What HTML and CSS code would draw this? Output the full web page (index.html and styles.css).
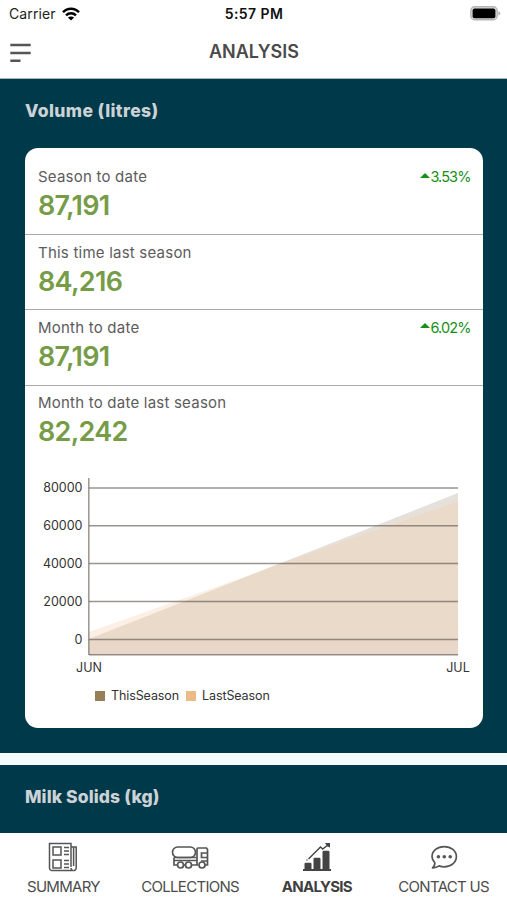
FILE: index.html
```html
<!DOCTYPE html>
<html lang="en">
<head>
  <meta charset="UTF-8">
  <title>Analysis</title>
  <meta name="viewport" content="width=device-width, initial-scale=1.0">
  <link rel="stylesheet" href="styles.css">
</head>
<body>
  <div class="statusbar">
    <div class="carrier">
      <span>Carrier</span>
      <svg width="18" height="14" viewBox="0 0 18 14" fill="none" stroke="#000" stroke-width="2.4">
        <path d="M1 5.2C5.4.5 12.6.5 17 5.2"/>
        <path d="M4 8.4c2.8-2.8 7.2-2.8 10 0"/>
        <path d="M9 13.6 5.9 10.6c1.7-1.5 4.5-1.5 6.2 0z" fill="#000" stroke="none"/>
      </svg>
    </div>
    <div class="time">5:57 PM</div>
    <div class="battery">
      <svg width="31" height="15" viewBox="0 0 31 15">
        <rect x="0.8" y="0.8" width="26.4" height="13" rx="4" fill="#ddd" stroke="#b5b5b5" stroke-width="1.4"/>
        <rect x="2.6" y="2.6" width="22.8" height="9.6" rx="2" fill="#000"/>
        <path d="M28.4 5.2q2 .6 2 2.2t-2 2.2z" fill="#b5b5b5"/>
      </svg>
    </div>
  </div>

  <header class="header">
    <svg class="menu" width="22" height="20" viewBox="0 0 22 20" stroke="#555" stroke-width="2.4">
      <path d="M.3 2h20.4M.3 10h20.4M.3 17.8h10.2"/>
    </svg>
    <h1>ANALYSIS</h1>
  </header>

  <main class="content">
    <section class="section volume">
      <h2>Volume (litres)</h2>
      <div class="card">
        <div class="row">
          <div class="label">Season to date</div>
          <div class="value">87,191</div>
          <div class="change"><i class="up"></i>3.53%</div>
        </div>
        <div class="row">
          <div class="label">This time last season</div>
          <div class="value">84,216</div>
        </div>
        <div class="row">
          <div class="label">Month to date</div>
          <div class="value">87,191</div>
          <div class="change"><i class="up"></i>6.02%</div>
        </div>
        <div class="row">
          <div class="label">Month to date last season</div>
          <div class="value">82,242</div>
        </div>

        <svg class="chart" width="457" height="210" viewBox="0 0 457 210">
          <!-- areas -->
          <path d="M64 163 433 17V179H64z" fill="#e6e0da"/>
          <path d="M64 156 433 25V179H64z" fill="#fcefe5"/>
          <path d="M64 163 248.5 90 433 25V179H64z" fill="#e9dac9"/>
          <path d="M64 164H433V179H64z" fill="#e9d8c9"/>
          <!-- grid and axes -->
          <g stroke="#5a5450" stroke-opacity="0.62" stroke-width="1.5">
            <path d="M64 12H433M64 49.7H433M64 87.5H433M64 125.5H433M64 163.5H433M64 178.7H433"/>
            <path d="M63.8 2V179"/>
          </g>
          <g class="ylabels">
            <text x="57.5" y="16">80000</text>
            <text x="57.5" y="54">60000</text>
            <text x="57.5" y="92">40000</text>
            <text x="57.5" y="130">20000</text>
            <text x="57.5" y="168">0</text>
          </g>
          <g class="xlabels">
            <text x="64" y="195.6">JUN</text>
            <text x="433" y="195.6">JUL</text>
          </g>
        </svg>

        <div class="legend">
          <span class="key this"></span><span>ThisSeason</span>
          <span class="key last"></span><span>LastSeason</span>
        </div>
      </div>
    </section>

    <section class="section solids">
      <h2>Milk Solids (kg)</h2>
    </section>
  </main>

  <nav class="tabs">
    <a class="tab">
      <svg width="30" height="30" viewBox="0 0 30 30" fill="none" stroke="#555" stroke-width="1.5">
        <path d="M23 25V1.5H1.5V26a2.5 2.5 0 0 0 2.5 2.5H25.5A2.5 2.5 0 0 1 23 26"/>
        <path d="M23 5h5.2V26a2.5 2.5 0 0 1-2.7 2.5M25.6 5v19"/>
        <path d="M5 5h8v8H5zM5 18h8v8H5z"/>
        <path d="M16 5.5h5M16 9h5M16 12.5h5M16 18.5h5M16 22h5M16 25.5h5" stroke-width="1.3"/>
      </svg>
      <span>SUMMARY</span>
    </a>
    <a class="tab">
      <svg width="38" height="30" viewBox="0 0 38 30" fill="none" stroke="#555" stroke-width="1.7">
        <rect x="1.5" y="5" width="23" height="10.5" rx="5.2"/>
        <path d="M3 15.5h22M2.5 18.5h23M3 15.5V23h3M13 23h1M21 23h6M26 23V7q0-1 1-1h8.5l1 1.5V23H34M36 11h-5.5v4.5H36M30 19h6"/>
        <circle cx="9.5" cy="23" r="3"/>
        <circle cx="17.5" cy="23" r="3"/>
        <circle cx="31" cy="23" r="3"/>
      </svg>
      <span>COLLECTIONS</span>
    </a>
    <a class="tab active">
      <svg width="30" height="30" viewBox="0 0 30 30" fill="#444">
        <path d="M1 27h28v2H1zM2.5 22q0-1.2 1.2-1.2h4.600Q9.500 20.800 9.500 22v5H2.500zM11.500 17q0-1.200 1.200-1.200h4.600Q18.500 15.800 18.500 17v10h-7zM20.500 10q0-1.200 1.200-1.200h4.600Q27.500 8.800 27.500 10v17h-7z"/>
        <path d="M6.5 17 18.5 5l2.2 2L26.5 2.5" fill="none" stroke="#444" stroke-width="1.4"/>
        <path d="M23 1h5v4.5l-2.5-1z"/>
        <circle cx="5" cy="18" r="0.7"/>
      </svg>
      <span>ANALYSIS</span>
    </a>
    <a class="tab">
      <svg width="30" height="30" viewBox="0 0 30 30" fill="none" stroke="#555" stroke-width="1.7">
        <path d="M3.5 25.8q2.6-2 2.3-5.2Q3 18 3 14.6C3 8.8 8.4 4.6 15.2 4.6S27.4 8.9 27.4 14.6 22 24.8 15.2 24.8q-2.7 0-5-.9Q7 26 3.5 25.8z" stroke-linejoin="round"/>
        <g fill="#555" stroke="none">
          <circle cx="9.4" cy="14.8" r="1.8"/>
          <circle cx="15.3" cy="14.8" r="1.8"/>
          <circle cx="21.2" cy="14.8" r="1.8"/>
        </g>
      </svg>
      <span>CONTACT US</span>
    </a>
  </nav>
</body>
</html>
```
FILE: styles.css
```css
* {
  box-sizing: border-box;
}

body {
  margin: 0;
  height: 900px;
  overflow: hidden;
  display: flex;
  flex-direction: column;
  font-family: Inter, "Liberation Sans", sans-serif;
  background-color: #fff;
}

.statusbar {
  display: grid;
  grid-template-columns: 1fr auto 1fr;
  align-items: center;
  height: 27px;
  padding: 0 6px 0 9px;
  color: #222;
  font-size: 14px;
}

.carrier {
  display: flex;
  align-items: center;
  gap: 6px;
  letter-spacing: 0.1px;
}

.time {
  padding-right: 2px;
  font-size: 14px;
  font-weight: 600;
  letter-spacing: 0.4px;
  color: #111;
}

.battery {
  display: flex;
  justify-content: flex-end;
}

.header {
  display: grid;
  grid-template-columns: 60px 1fr 60px;
  align-items: center;
  height: 52px;
  padding: 0 0 2px;
  border-bottom: 1px solid #a9b5ba;
}

.menu {
  margin-left: 10px;
  margin-top: 3px;
}

h1 {
  margin: 0;
  padding-left: 1px;
  text-align: center;
  font-size: 18px;
  font-weight: 600;
  color: #4a4a4a;
}

.content {
  flex: 1;
  display: flex;
  flex-direction: column;
  gap: 12px;
  overflow: hidden;
  background-color: #f5fcfe;
}

.section {
  flex: none;
  padding: 18px 25px 0;
  background-color: #003a4a;
}

.volume {
  height: 674px;
}

.solids {
  height: 120px;
}

h2 {
  margin: 0;
  height: 51px;
  line-height: 27px;
  font-size: 17.5px;
  font-weight: 800;
  letter-spacing: 0.4px;
  color: #ccd2d6;
}

.solids h2 {
  letter-spacing: 0.1px;
}

.card {
  height: 580px;
  width: 457.5px;
  border-radius: 13px;
  background-color: #fff;
}

.row {
  display: grid;
  grid-template-columns: 1fr auto;
  align-content: start;
  height: 75.3px;
  padding: 6.6px 12px 0 13px;
  border-bottom: 1.5px solid #aaa;
}

.row:first-child {
  height: 87px;
  padding-top: 18px;
}

.row:nth-child(4) {
  padding-top: 6px;
  border-bottom: none;
}

.label {
  font-size: 15px;
  line-height: 22px;
  letter-spacing: 0.22px;
  color: #5c5c5c;
}

.value {
  grid-column: 1;
  font-size: 27px;
  font-weight: 600;
  line-height: 35px;
  letter-spacing: -0.7px;
  color: #769c48;
}

.change {
  grid-column: 2;
  grid-row: 1;
  display: flex;
  align-items: center;
  height: 21px;
  font-size: 14.5px;
  letter-spacing: -0.9px;
  color: #169016;
}

.up {
  border: 5px solid transparent;
  border-top: none;
  border-bottom: 5px solid #169016;
  margin-bottom: 3px;
}

.chart {
  display: block;
  margin-top: 15px;
}

.chart text {
  font-size: 12.5px;
  fill: #333;
}

.ylabels {
  text-anchor: end;
}

.xlabels {
  text-anchor: middle;
}

.legend {
  display: flex;
  align-items: center;
  height: 20px;
  padding-left: 70px;
  font-size: 12.5px;
  letter-spacing: -0.1px;
  color: #333;
}

.key {
  width: 10px;
  height: 10px;
  margin-right: 6px;
}

.this {
  background-color: #957e58;
}

.last {
  margin-left: 7px;
  background-color: #ebba88;
}

.tabs {
  display: grid;
  grid-template-columns: repeat(4, 1fr);
  height: 67px;
  padding-top: 9px;
  background-color: #fff;
}

.tab {
  display: flex;
  flex-direction: column;
  align-items: center;
  font-size: 15px;
  line-height: 29px;
  letter-spacing: -0.7px;
  white-space: nowrap;
  color: #4c4c4c;
}

.active {
  font-weight: 700;
  color: #3f3f3f;
}
```
